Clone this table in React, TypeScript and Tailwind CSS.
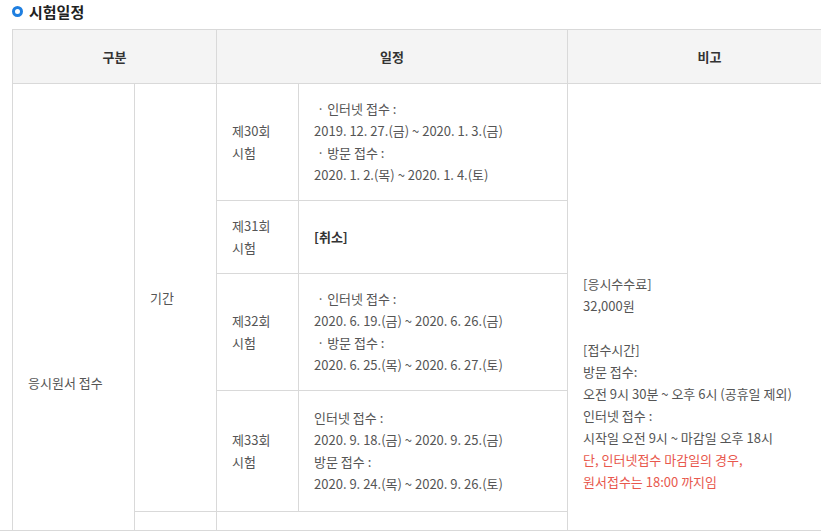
const font = '"Noto Sans CJK KR", "Noto Sans", sans-serif';

type Round = {
  name: string[];
  lines: React.ReactNode[];
  tall?: boolean;
};

const rounds: Round[] = [
  {
    name: ["제30회", "시험"],
    lines: [
      "\u00a0· 인터넷 접수 :",
      "2019. 12. 27.(금) ~ 2020. 1. 3.(금)",
      "\u00a0· 방문 접수 :",
      "2020. 1. 2.(목) ~ 2020. 1. 4.(토)",
    ],
  },
  {
    name: ["제31회", "시험"],
    lines: [<b className="font-bold text-[#333]">[취소]</b>],
  },
  {
    name: ["제32회", "시험"],
    lines: [
      "\u00a0· 인터넷 접수 :",
      "2020. 6. 19.(금) ~ 2020. 6. 26.(금)",
      "\u00a0· 방문 접수 :",
      "2020. 6. 25.(목) ~ 2020. 6. 27.(토)",
    ],
  },
  {
    name: ["제33회", "시험"],
    lines: [
      "인터넷 접수 :",
      "2020. 9. 18.(금) ~ 2020. 9. 25.(금)",
      "방문 접수 :",
      "2020. 9. 24.(목) ~ 2020. 9. 26.(토)",
    ],
    tall: true,
  },
];

const th = "border border-[#d9d9d9] bg-[#f4f4f4] h-[54px] text-center font-bold text-[#333]";
const td = "border border-[#d9d9d9] px-[15px] py-[14px] align-middle text-left";

export default function App() {
  return (
    <div
      className="h-[531px] w-[821px] overflow-hidden border-b border-[#d9d9d9] bg-white"
      style={{ fontFamily: font }}
    >
      <div className="flex items-center gap-[6px] pl-[12px] pt-[1px] h-[22px]">
        <span className="block w-[11px] h-[11px] rounded-full border-[3px] border-[#1f7fe0]" />
        <h2 className="text-[15px] font-bold text-[#222] leading-[22px]">시험일정</h2>
      </div>

      <table className="ml-[12px] mt-[7px] w-[840px] table-fixed border-collapse text-[13px] leading-[22px] text-[#555]">
        <colgroup>
          <col className="w-[122px]" />
          <col className="w-[82px]" />
          <col className="w-[82px]" />
          <col className="w-[269px]" />
          <col />
        </colgroup>
        <thead>
          <tr>
            <th colSpan={2} className={th}>구분</th>
            <th colSpan={2} className={th}>일정</th>
            <th className={th}>비고</th>
          </tr>
        </thead>
        <tbody>
          {rounds.map((r, i) => (
            <tr key={i} className={r.tall ? "h-[121px]" : ""}>
              {i === 0 && (
                <td rowSpan={5} className={td}>응시원서 접수</td>
              )}
              {i === 0 && (
                <td rowSpan={4} className={td}>기간</td>
              )}
              <td className={td}>
                {r.name.map((n) => (
                  <div key={n}>{n}</div>
                ))}
              </td>
              <td className={td}>
                {r.lines.map((l, j) => (
                  <div key={j}>{l}</div>
                ))}
              </td>
              {i === 0 && (
                <td rowSpan={5} className={td}>
                  <div>[응시수수료]</div>
                  <div>32,000원</div>
                  <div className="h-[22px]" />
                  <div>[접수시간]</div>
                  <div>방문 접수:</div>
                  <div>오전 9시 30분 ~ 오후 6시 (공휴일 제외)</div>
                  <div>인터넷 접수 :</div>
                  <div>시작일 오전 9시 ~ 마감일 오후 18시</div>
                  <div className="text-[#e8584d]">단, 인터넷접수 마감일의 경우,</div>
                  <div className="text-[#e8584d]">원서접수는 18:00 까지임</div>
                </td>
              )}
            </tr>
          ))}
          <tr className="h-[170px]">
            <td className={td} />
            <td colSpan={2} className={td} />
          </tr>
        </tbody>
      </table>
    </div>
  );
}
